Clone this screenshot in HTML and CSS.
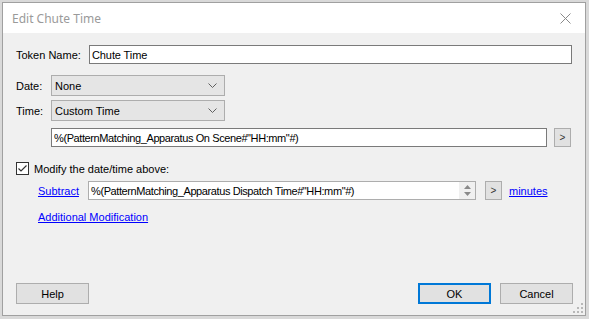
FILE: index.html
```html
<!DOCTYPE html>
<html lang="en">
<head>
  <meta charset="UTF-8">
  <title>Edit Chute Time</title>
  <link rel="stylesheet" href="styles.css">
</head>
<body>
  <div class="dialog">
    <div class="titlebar">
      <span class="title">Edit Chute Time</span>
      <svg class="close" width="11" height="11" viewBox="0 0 11 11">
        <path d="M0.5 0.5 L10.5 10.5 M10.5 0.5 L0.5 10.5" stroke="#8a8a8a" stroke-width="1" fill="none"/>
      </svg>
    </div>

    <div class="content">
      <div class="row token-row">
        <label class="lbl token-lbl">Token Name:</label>
        <input class="field token-field" type="text" value="Chute Time">
      </div>

      <div class="row date-row">
        <label class="lbl short-lbl">Date:</label>
        <div class="combo"><span>None</span><svg width="9" height="5" viewBox="0 0 9 5"><path d="M0.5 0.5 L4.5 4.5 L8.5 0.5" stroke="#606060" fill="none"/></svg></div>
      </div>

      <div class="row time-row">
        <label class="lbl short-lbl">Time:</label>
        <div class="combo"><span>Custom Time</span><svg width="9" height="5" viewBox="0 0 9 5"><path d="M0.5 0.5 L4.5 4.5 L8.5 0.5" stroke="#606060" fill="none"/></svg></div>
      </div>

      <div class="row expr-row">
        <input class="field expr-field" type="text" value="%(PatternMatching_Apparatus On Scene#&quot;HH:mm&quot;#)">
        <button class="mini">&gt;</button>
      </div>

      <div class="row check-row">
        <span class="check">
          <svg width="11" height="11" viewBox="0 0 11 11"><path d="M1.5 5.5 L4 8 L9.5 2.5" stroke="#333" stroke-width="1.2" fill="none"/></svg>
        </span>
        <span class="check-text">Modify the date/time above:</span>
      </div>

      <div class="row sub-row">
        <a class="link sub-link" href="#">Subtract</a>
        <div class="spin">
          <span class="spin-text">%(PatternMatching_Apparatus Dispatch Time#"HH:mm"#)</span>
          <div class="spin-btns">
            <svg width="7" height="4" viewBox="0 0 7 4"><path d="M3.5 0 L7 4 L0 4 Z" fill="#8a8a8a"/></svg>
            <svg width="7" height="4" viewBox="0 0 7 4"><path d="M0 0 L7 0 L3.5 4 Z" fill="#8a8a8a"/></svg>
          </div>
        </div>
        <button class="mini sub-mini">&gt;</button>
        <a class="link" href="#">minutes</a>
      </div>

      <div class="row add-row">
        <a class="link" href="#">Additional Modification</a>
      </div>
    </div>

    <div class="footer">
      <button class="btn">Help</button>
      <span class="spacer"></span>
      <button class="btn btn-default">OK</button>
      <button class="btn">Cancel</button>
    </div>

    <svg class="grip" width="10" height="10" viewBox="0 0 10 10">
      <rect x="8" y="0" width="2" height="2" fill="#b8b8b8"/>
      <rect x="4" y="4" width="2" height="2" fill="#b8b8b8"/>
      <rect x="8" y="4" width="2" height="2" fill="#b8b8b8"/>
      <rect x="0" y="8" width="2" height="2" fill="#b8b8b8"/>
      <rect x="4" y="8" width="2" height="2" fill="#b8b8b8"/>
      <rect x="8" y="8" width="2" height="2" fill="#b8b8b8"/>
    </svg>
  </div>
</body>
</html>
```

FILE: styles.css
```css
body {
  margin: 0;
  background: #d9d9d9;
  font-family: "Liberation Sans", Arial, sans-serif;
  font-size: 11px;
  color: #000;
  overflow: hidden;
}
.dialog {
  position: relative;
  width: 584px;
  height: 314px;
  margin: 2px 0 0 2px;
  box-sizing: border-box;
  border: 1px solid #a0a0a0;
  background: #f0f0f0;
  display: flex;
  flex-direction: column;
}
.titlebar {
  height: 30px;
  background: #fff;
  display: flex;
  align-items: center;
  justify-content: space-between;
  padding: 0 14px 0 9px;
}
.title {
  font-family: "Noto Sans", sans-serif;
  font-size: 12px;
  color: #9a9a9a;
}
.content {
  padding: 12px 13px 0 13px;
}
.row {
  display: flex;
  align-items: center;
}
.lbl {
  flex: none;
}
.token-lbl { width: 73px; }
.short-lbl { width: 35px; }
.field {
  box-sizing: border-box;
  height: 19px;
  border: 1px solid #7a7a7a;
  background: #fff;
  font: inherit;
  letter-spacing: -0.4px;
  padding: 0 2px;
  margin: 0;
  outline: none;
}
.token-field { width: 484px; letter-spacing: -0.1px; }
.date-row { margin-top: 11px; }
.time-row { margin-top: 4px; }
.combo {
  box-sizing: border-box;
  width: 174px;
  height: 21px;
  border: 1px solid #adadad;
  background: #e5e5e5;
  display: flex;
  align-items: center;
  justify-content: space-between;
  padding: 0 7px 0 3px;
}
.expr-row {
  margin-top: 7px;
  padding-left: 35px;
}
.expr-field { width: 496px; }
.mini {
  box-sizing: border-box;
  width: 17px;
  height: 19px;
  margin: 0 0 0 7px;
  padding: 0;
  border: 1px solid #adadad;
  background: #e1e1e1;
  font: inherit;
  font-size: 10px;
  color: #333;
}
.check-row { margin-top: 15px; }
.check {
  box-sizing: border-box;
  width: 13px;
  height: 13px;
  border: 1px solid #333;
  background: #fff;
  display: flex;
  align-items: center;
  justify-content: center;
}
.check-text { margin-left: 5px; }
.sub-row {
  margin-top: 6px;
  padding-left: 22px;
}
.link {
  color: #0000ff;
  text-decoration: underline;
}
.sub-link {
  width: 50px;
  flex: none;
}
.spin {
  box-sizing: border-box;
  width: 388px;
  height: 19px;
  border: 1px solid #adadad;
  background: #fff;
  display: flex;
  align-items: center;
  justify-content: space-between;
  padding: 0 0 0 2px;
}
.spin-text { letter-spacing: -0.4px; }
.spin-btns {
  width: 16px;
  height: 17px;
  background: #f0f0f0;
  display: flex;
  flex-direction: column;
  align-items: center;
  justify-content: space-around;
  padding: 1px 0;
  box-sizing: border-box;
}
.sub-mini { margin-left: 9px; }
.sub-row .link:last-child { margin-left: 7px; }
.add-row { margin-top: 11px; padding-left: 22px; }
.footer {
  margin-top: auto;
  display: flex;
  padding: 0 12px 11px 13px;
}
.spacer { flex: 1; }
.btn {
  box-sizing: border-box;
  width: 73px;
  height: 21px;
  margin: 0;
  padding: 0;
  border: 1px solid #adadad;
  background: #e1e1e1;
  font: inherit;
  color: #000;
}
.btn-default {
  border: 2px solid #0078d7;
  margin-right: 9px;
}
.grip {
  position: absolute;
  right: 2px;
  bottom: 2px;
}
```
